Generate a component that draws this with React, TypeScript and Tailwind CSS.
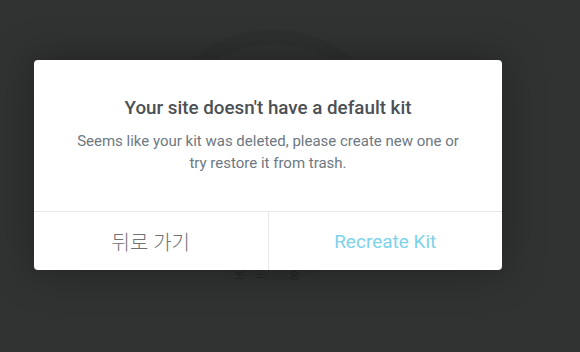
import React from "react";

// Elementor-style "no default kit" confirm dialog over the loading screen.

const FONT = { fontFamily: 'Roboto, "Noto Sans CJK KR", Arial, sans-serif' };

export default function App() {
	return (
		<div
			className="relative h-[352px] w-[580px] overflow-hidden bg-[#313332]"
			style={FONT}
		>
			{/* faint loader behind the dialog */}
			<div className="absolute left-[148px] top-[30px] h-[250px] w-[250px] rounded-full border-[14px] border-[#2e302f]" />
			<div className="absolute left-[234px] top-[267px] flex text-[12px] leading-[16px] text-[#242625]">
				<span className="w-[22px]">로</span>
				<span className="w-[33px]">드</span>
				<span>중</span>
			</div>

			<div className="relative pl-[34px] pt-[60px]">
				<div className="flex h-[210px] w-[468px] flex-col rounded-[4px] bg-white shadow-[0_0_40px_rgba(0,0,0,0.35)]">
					<div className="flex flex-1 flex-col items-center pt-[36px] text-center">
						<h2 className="text-[18.8px] font-medium leading-[24px] text-[#4b5055]">
							Your site doesn't have a default kit
						</h2>
						<p className="mt-[10px] text-[15px] leading-[22px] text-[#6d7882]">
							Seems like your kit was deleted, please create new one or
							<br />
							try restore it from trash.
						</p>
					</div>
					<div className="flex h-[59px] border-t border-[#e6e8ea]">
						<button className="flex flex-1 items-center justify-center pt-[3px] text-[20px] font-light text-[#6f7173]">
							뒤로 가기
						</button>
						<button className="flex flex-1 items-center justify-center border-l border-[#e6e8ea] pt-[3px] text-[19px] text-[#7dd3ea]">
							Recreate Kit
						</button>
					</div>
				</div>
			</div>
		</div>
	);
}
